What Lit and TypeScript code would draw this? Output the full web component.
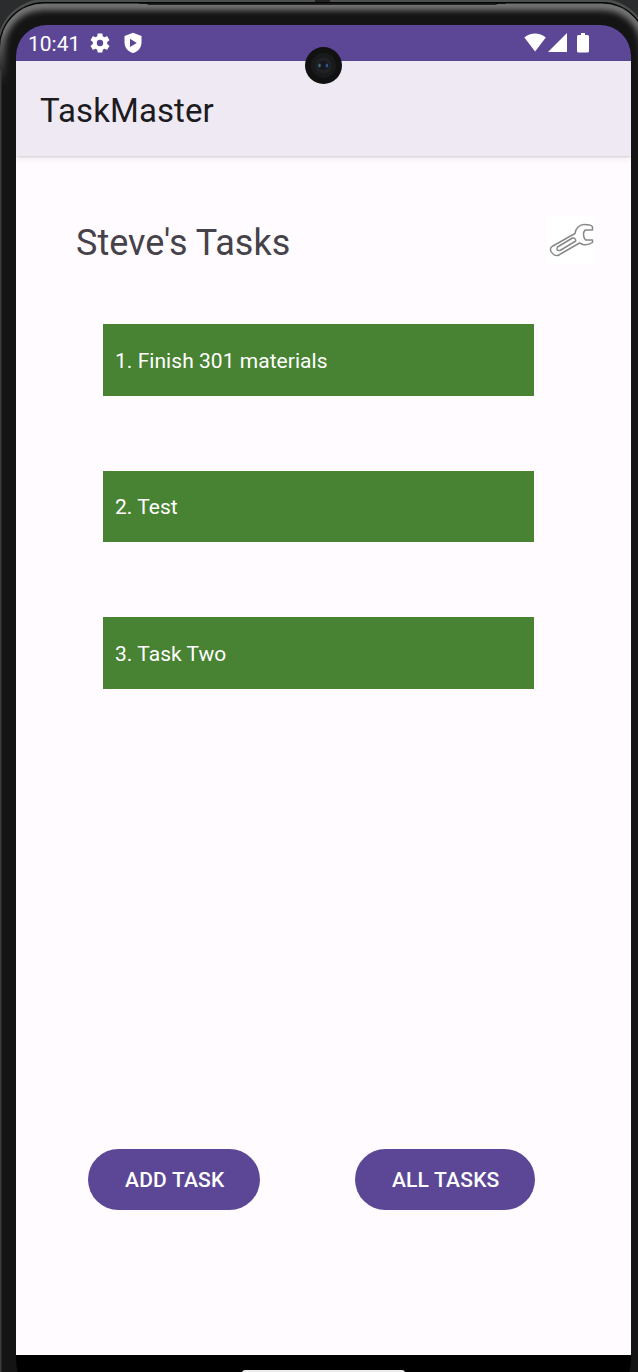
import { LitElement, html, css } from "lit";
import { customElement, property, state } from "lit/decorators.js";

interface Task {
  id: number;
  title: string;
}

@customElement("device-bezel")
class DeviceBezel extends LitElement {
  static styles = css`
    :host { display: block; }
    svg { display: block; width: 100%; height: 100%; }
  `;
  render() {
    return html`<svg viewBox="0 0 638 1372" aria-hidden="true">
      <defs>
        <linearGradient id="rim" x1="0" y1="0" x2="0" y2="85" gradientUnits="userSpaceOnUse">
          <stop offset="0" stop-color="#7c7c7c" />
          <stop offset=".35" stop-color="#7c7c7c" />
          <stop offset="1" stop-color="#7c7c7c" stop-opacity="0" />
        </linearGradient>
        <filter id="soft" x="-60" y="-60" width="780" height="300" filterUnits="userSpaceOnUse"><feGaussianBlur stdDeviation="3.2" /></filter>
        <clipPath id="shell"><rect x="0" y="3.500" width="646" height="1500" rx="44" /></clipPath>
      </defs>
      <rect width="638" height="1372" fill="#2b2c2e" />
      <rect x="-3" y="-1" width="652" height="1500" rx="48" fill="#4b4f4d" />
      <rect x="-1" y="2" width="648" height="1500" rx="45" fill="#050505" />
      <g clip-path="url(#shell)">
        <rect x="0" y="3" width="646" height="1500" fill="#141414" />
        <path d="M0 100V48C0 22 20 5 45 5H601C626 5 646 22 646 48V100" fill="none" stroke="url(#rim)" stroke-width="10" filter="url(#soft)" />
        <path d="M.7 70V1372M645.3 70V1372" stroke="#3b3b3b" stroke-width="1.6" />
      </g>
      <path d="M139 3H146L149 4H495L499 3H506" fill="none" stroke="#090909" stroke-width="1.5" />
      <rect x="315" y="0" width="15" height="2" fill="#202322" />
    </svg>`;
  }
}

@customElement("camera-lens")
class CameraLens extends LitElement {
  static styles = css`
    :host { display: block; width: 38px; height: 38px; }
    svg { display: block; }
  `;
  render() {
    return html`<svg width="38" height="38" viewBox="0 0 38 38" aria-hidden="true">
      <circle cx="19.5" cy="19.5" r="18.5" fill="#111" />
      <circle cx="19.5" cy="19.5" r="12.5" fill="#191a1b" />
      <circle cx="19.5" cy="19.5" r="8" fill="#202225" />
      <ellipse cx="19.5" cy="19.5" rx="6" ry="4.5" fill="#15191f" />
      <ellipse cx="15.5" cy="19.5" rx="1.2" ry="2" fill="#3d7378" />
      <ellipse cx="23" cy="19.5" rx="1.3" ry="2" fill="#344f91" />
    </svg>`;
  }
}

@customElement("status-bar")
class StatusBar extends LitElement {
  static styles = css`
    :host {
      display: flex;
      align-items: center;
      justify-content: space-between;
      height: 36px;
      box-sizing: border-box;
      padding: 0 41px 0 12px;
      background: #5c4796;
      color: #fff;
      font-size: 21px;
    }
    .left { display: flex; align-items: center; }
    .time { width: 62px; line-height: 36px; padding-top: 1px; }
    .gear { margin-right: 13.500px; }
    svg { display: block; }
  `;
  @property() time = "";
  render() {
    return html`
      <div class="left">
        <span class="time">${this.time}</span>
        <svg class="gear" width="20" height="22" viewBox="2 1.500 20 21" fill="#fff">
          <path d="M19.14 12.94c.04-.3.06-.61.06-.94 0-.32-.02-.64-.07-.94l2.03-1.58c.18-.14.23-.41.12-.61l-1.92-3.32c-.12-.22-.37-.29-.59-.22l-2.39.96c-.5-.38-1.03-.7-1.62-.94l-.36-2.54c-.04-.24-.24-.41-.48-.41h-3.84c-.24 0-.43.17-.47.41l-.36 2.54c-.59.24-1.13.57-1.62.94l-2.39-.96c-.22-.08-.47 0-.59.22L2.74 8.87c-.12.21-.08.47.12.61l2.03 1.58c-.05.3-.09.63-.09.94s.02.64.07.94l-2.03 1.58c-.18.14-.23.41-.12.61l1.92 3.32c.12.22.37.29.59.22l2.39-.96c.5.38 1.03.7 1.62.94l.36 2.54c.05.24.24.41.48.41h3.84c.24 0 .44-.17.47-.41l.36-2.54c.59-.24 1.13-.56 1.62-.94l2.39.96c.22.08.47 0 .59-.22l1.92-3.32c.12-.22.07-.47-.12-.61l-2.01-1.58zM12 15.2a3.2 3.2 0 1 1 0-6.4 3.2 3.2 0 0 1 0 6.4z" />
        </svg>
        <svg width="18" height="22" viewBox="0 0 18 22">
          <path d="M9 .8.5 4V10.500C.5 15.500 4 19.700 9 21c5-1.300 8.500-5.500 8.500-10.500V4Z" fill="#fff" />
          <path d="M6 6.800v8.200l6.800-4.100Z" fill="#5c4796" />
        </svg>
      </div>
      <svg width="66" height="20" viewBox="0 0 66 20" fill="#fff">
        <path d="M.4 4.500C6.500-.7 15.500-.7 21.800 4.500L11.100 18.500Z" />
        <path d="M24 19H43V0Z" />
        <path d="M57 0h4v2h2.500q1.500 0 1.500 1.500V18q0 1.500-1.500 1.500h-9q-1.500 0-1.500-1.500V3.500Q53 2 54.500 2H57Z" />
      </svg>
    `;
  }
}

@customElement("task-card")
class TaskCard extends LitElement {
  static styles = css`
    :host {
      display: flex;
      align-items: center;
      box-sizing: border-box;
      height: 71.600px;
      padding: 2px 12px 0;
      background: #488233;
      color: #fff;
      font-size: 21px;
      letter-spacing: 0.04px;
    }
  `;
  @property({ attribute: false }) task!: Task;
  render() {
    return html`${this.task.id}. ${this.task.title}`;
  }
}

@customElement("app-root")
class AppRoot extends LitElement {
  static styles = css`
    :host {
      display: block;
      position: relative;
      width: 638px;
      height: 1372px;
      overflow: hidden;
      box-sizing: border-box;
      padding: 25px 7px 0 16px;
      font-family: Roboto, sans-serif;
      background: #141414;
    }
    device-bezel { position: absolute; inset: 0; }
    camera-lens { position: absolute; left: 304px; top: 46px; }
    .screen {
      position: relative;
      display: flex;
      flex-direction: column;
      height: 1386px;
      border-radius: 31px 31px 52px 52px;
      overflow: hidden;
      background: #000;
    }
    .appbar {
      position: relative;
      display: flex;
      align-items: center;
      flex: none;
      height: 95px;
      box-sizing: border-box;
      padding: 4px 24px 0;
      background: #efe9f4;
      box-shadow: 0 1px 2px #0002, 0 3px 7px #0001;
      color: #1c1b1f;
      font-size: 33px;
      letter-spacing: 0.1px;
    }
    .content {
      display: flex;
      flex-direction: column;
      flex: none;
      height: 1199px;
      box-sizing: border-box;
      background: #fffbfe;
    }
    .heading {
      display: flex;
      align-items: center;
      justify-content: space-between;
      height: 48px;
      padding: 60px 36px 0 60px;
    }
    h1 { margin: 5px 0 0; font-size: 36px; font-weight: 400; line-height: 48px; color: #45424a; }
    .settings { width: 48px; height: 48px; padding: 0; border: 0; background: #fff; }
    .settings svg { display: block; }
    .tasks {
      display: flex;
      flex-direction: column;
      gap: 74.800px;
      padding: 60.200px 97.500px 0 87px;
    }
    .actions {
      display: flex;
      justify-content: space-between;
      margin: auto 96px 145.500px 72px;
    }
    .actions button {
      width: 172px;
      height: 60.500px;
      border: 0;
      border-radius: 31px;
      padding: 1px 0 0 1.500px;
      background: #5c4796;
      color: #fff;
      font: 500 21px Roboto, sans-serif;
      letter-spacing: 0.2px;
    }
    .actions .all { width: 180px; }
    .nav { display: flex; justify-content: center; padding-top: 15px; }
    .nav span { width: 163px; height: 6px; border-radius: 3px; background: #ececec; }
  `;
  @state() private tasks: Task[] = [
    { id: 1, title: "Finish 301 materials" },
    { id: 2, title: "Test" },
    { id: 3, title: "Task Two" },
  ];
  render() {
    return html`
      <device-bezel></device-bezel>
      <div class="screen">
        <status-bar time="10:41"></status-bar>
        <header class="appbar">TaskMaster</header>
        <main class="content">
          <div class="heading">
            <h1>Steve's Tasks</h1>
            <button class="settings" aria-label="Settings">
              <svg width="48" height="48" viewBox="0 0 48 48" fill="none" stroke="#888" stroke-width="1.500" stroke-linejoin="round" stroke-linecap="round">
                <path d="M5 30.500 28 17.500C28.500 12 33 8.500 37 8.500 41 8.500 45 9.500 45.500 11V14H38.500Q36.500 15 36.500 18.500T38.500 24H45.500V26.500Q41 29.500 36 28.500L32.500 27 11 39.500Q6.500 40 4 35.500 2.500 32.500 5 30.500Z" />
                <path d="M10.500 31 25.500 22Q28.500 21.500 28.800 25L13 34.500Q8.500 35 10.500 31Z" />
              </svg>
            </button>
          </div>
          <div class="tasks">
            ${this.tasks.map((t) => html`<task-card .task=${t}></task-card>`)}
          </div>
          <div class="actions">
            <button>ADD TASK</button>
            <button class="all">ALL TASKS</button>
          </div>
        </main>
        <div class="nav"><span></span></div>
      </div>
      <camera-lens></camera-lens>
    `;
  }
}
